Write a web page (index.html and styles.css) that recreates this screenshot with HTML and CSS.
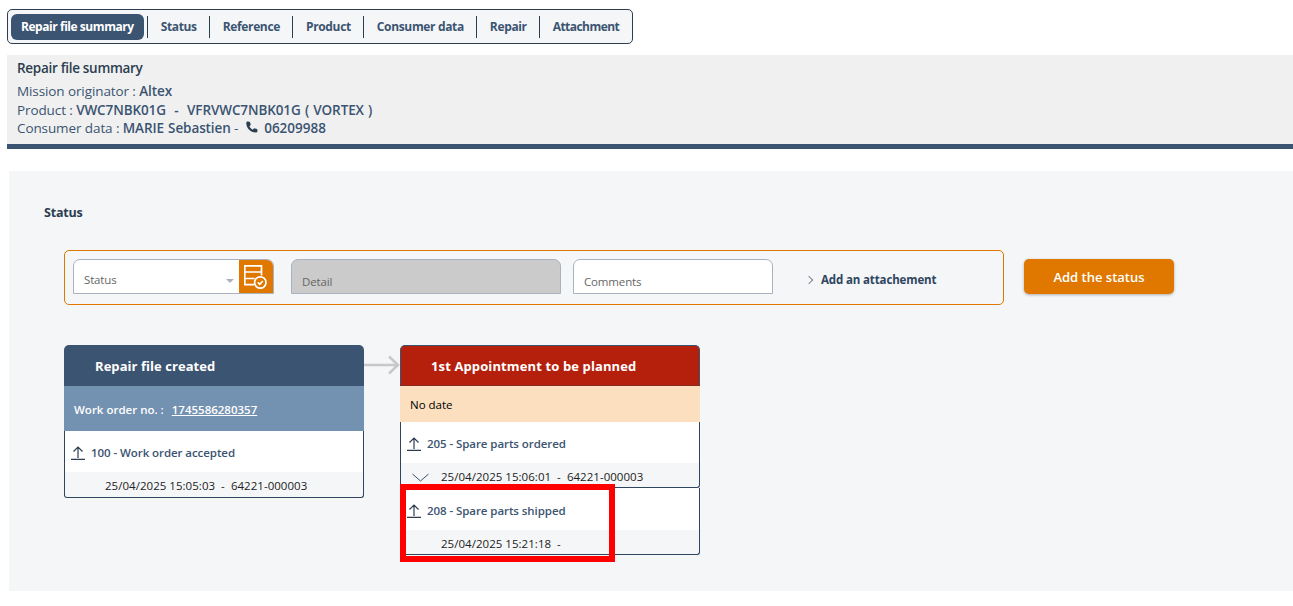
FILE: index.html
```html
<!DOCTYPE html>
<html lang="en">
<head>
<meta charset="UTF-8" />
<title>Repair file summary</title>
<link rel="stylesheet" href="styles.css">
</head>
<body>
  <!-- Tabs -->
  <nav class="tabs">
    <a class="tab active">Repair file summary</a>
    <a class="tab">Status</a>
    <a class="tab">Reference</a>
    <a class="tab">Product</a>
    <a class="tab">Consumer data</a>
    <a class="tab">Repair</a>
    <a class="tab">Attachment</a>
  </nav>

  <!-- Summary -->
  <section class="summary">
    <h2>Repair file summary</h2>
    <p>Mission originator : <b>Altex</b></p>
    <p>Product : <b>VWC7NBK01G &nbsp;-&nbsp; VFRVWC7NBK01G ( VORTEX )</b></p>
    <p>Consumer data : <b>MARIE Sebastien</b> -
      <svg class="phone" width="15" height="15" viewBox="0 0 24 24"><path d="M6.600 2.500l3 .6 1.300 5-2.300 1.900c1.100 2.400 3 4.400 5.400 5.500l2-2.300 5 1.300.6 3c.1 1.200-.8 2.300-2 2.400C10.500 20.300 3.700 13.500 3.600 4.500c.1-1.200 1.300-2.100 3-2z"/></svg>
      <b class="tel">06209988</b></p>
  </section>

  <!-- Status panel -->
  <main class="panel">
    <h3>Status</h3>

    <div class="form-row">
      <form class="status-form">
        <div class="field select">
          <span class="select-label">Status</span>
          <span class="caret"></span>
          <span class="select-btn">
            <svg width="24" height="24" viewBox="0 0 24 24" fill="none" stroke="#fff" stroke-width="1.700">
              <path d="M10 19.700H.8V.8h16.700v9.700M.8 7h16.700M.8 13.500h9.700"/>
              <circle cx="16.300" cy="17.500" r="5.700"/>
              <path d="M13.800 17.300l2 2 3-3.300"/>
            </svg>
          </span>
        </div>
        <div class="field input disabled">Detail</div>
        <div class="field input comments">Comments</div>
        <a class="attach"><span class="chev"></span>Add an attachement</a>
      </form>
      <button class="add-btn" type="button">Add the status</button>
    </div>

    <div class="flow">
      <div class="col">
        <div class="col-head blue">Repair file created</div>
        <div class="col-sub blue-light">Work order no. : <u>1745586280357</u></div>
        <div class="event">
          <div class="event-top">
            <svg class="up" width="16" height="14" viewBox="0 0 16 14" fill="none" stroke="#2c3e50" stroke-width="1.200"><path d="M0 13.400h14M7 12V1M2.500 5.500L7 1l4.500 4.500"/></svg>
            100 - Work order accepted
          </div>
          <div class="event-date">25/04/2025 15:05:03 &nbsp;-&nbsp; 64221-000003</div>
        </div>
      </div>

      <svg class="arrow" width="36" height="22" viewBox="0 0 36 22" fill="none" stroke="#c8c8c8" stroke-width="2.500"><path d="M0 11h34M25 2.500l9 8.500-9 8.500"/></svg>

      <div class="col">
        <div class="col-head red">1st Appointment to be planned</div>
        <div class="col-sub peach">No date</div>
        <div class="event first">
          <div class="event-top">
            <svg class="up" width="16" height="14" viewBox="0 0 16 14" fill="none" stroke="#2c3e50" stroke-width="1.200"><path d="M0 13.400h14M7 12V1M2.500 5.500L7 1l4.500 4.500"/></svg>
            205 - Spare parts ordered
          </div>
          <div class="event-date">
            <svg class="down" width="17" height="9" viewBox="0 0 17 9" fill="none" stroke="#3b5471" stroke-width="1"><path d="M.5 1l8 7 8-7"/></svg>
            25/04/2025 15:06:01 &nbsp;-&nbsp; 64221-000003
          </div>
        </div>
        <div class="event next">
          <div class="event-top">
            <svg class="up" width="16" height="14" viewBox="0 0 16 14" fill="none" stroke="#2c3e50" stroke-width="1.200"><path d="M0 13.400h14M7 12V1M2.500 5.500L7 1l4.500 4.500"/></svg>
            208 - Spare parts shipped
          </div>
          <div class="event-date">25/04/2025 15:21:18 &nbsp;-</div>
        </div>
        <!-- Red annotation box -->
        <div class="highlight"></div>
      </div>
    </div>
  </main>
</body>
</html>
```

FILE: styles.css
```css
* {
  margin: 0;
  padding: 0;
  box-sizing: border-box;
}

html, body {
  height: 100%;
  overflow: hidden;
  background: #fff;
  font-family: 'Open Sans', sans-serif;
  color: #3b5471;
}

/* Tabs */
.tabs {
  display: inline-flex;
  align-items: center;
  height: 35px;
  margin: 9px 0 0 7px;
  padding: 0 3px;
  background: #f5f6f8;
  border: 1px solid #2c3e50;
  border-radius: 5px;
  vertical-align: top;
}

.tab {
  height: 22px;
  padding: 0 12px 0 13px;
  border-left: 1px solid #2c3e50;
  font-size: 12px;
  font-weight: 700;
  letter-spacing: -0.35px;
  line-height: 22px;
}

.tab:last-child {
  padding-right: 10px;
  letter-spacing: -0.55px;
}

.tab.active {
  height: 26px;
  margin-right: 3px;
  padding: 0 10px;
  border-left: 0;
  border-radius: 6px;
  background: #3b5471;
  color: #fff;
  letter-spacing: -0.45px;
  line-height: 26px;
}

/* Summary */
.summary {
  display: block;
  height: 94px;
  margin: 11px 0 0 7px;
  padding: 4px 10px 0;
  background: #f0f0f0;
  border-bottom: 5px solid #3b5471;
  font-size: 13.500px;
  letter-spacing: -0.1px;
  line-height: 18.500px;
}

.summary h2 {
  margin-bottom: 5px;
  font-size: 13.500px;
  font-weight: 600;
  letter-spacing: -0.3px;
  line-height: 18px;
  color: #2c3e50;
}

.summary b {
  font-weight: 600;
  word-spacing: 0.8px;
}

.phone {
  margin: 0 2px -2px 2px;
  fill: #2c3e50;
}

.tel {
  letter-spacing: 0;
}

/* Status panel */
.panel {
  height: 420px;
  margin: 22px 0 0 9px;
  padding: 33px 0 0 35px;
  background: #f5f6f8;
}

.panel h3 {
  font-size: 12.500px;
  font-weight: 700;
  line-height: 18px;
  letter-spacing: -0.2px;
  color: #2c3e50;
}

.form-row {
  display: flex;
  align-items: flex-start;
  gap: 20px;
  margin: 28px 0 0 20px;
}

.status-form {
  display: flex;
  align-items: flex-end;
  width: 940px;
  height: 55px;
  padding: 0 8px 10px;
  border: 1px solid #e07800;
  border-radius: 5px;
}

.field {
  height: 35px;
  border: 1px solid #aab2c0;
  border-radius: 7px 7px 0 0;
  background: #fff;
  font-size: 11.500px;
  letter-spacing: -0.15px;
  color: #666;
}

.select {
  display: flex;
  align-items: center;
  width: 201px;
  overflow: hidden;
  padding-left: 10px;
}

.select-label {
  flex: 1;
  padding-top: 6px;
}

.caret {
  width: 0;
  height: 0;
  margin: 9px 5px 0 0;
  border-left: 4px solid transparent;
  border-right: 4px solid transparent;
  border-top: 4px solid #aab2c0;
}

.select-btn {
  display: flex;
  align-items: center;
  justify-content: center;
  width: 34px;
  height: 100%;
  background: #e07800;
}

.input {
  padding: 13px 10px 0;
  line-height: 18px;
}

.disabled {
  width: 270px;
  margin-left: 17px;
  background: #cbcbcb;
}

.comments {
  width: 200px;
  margin-left: 12px;
}

.attach {
  display: flex;
  align-items: center;
  height: 29px;
  margin-left: 33px;
  font-size: 11.500px;
  font-weight: 700;
  letter-spacing: -0.13px;
  color: #2f4560;
}

.chev {
  width: 6px;
  height: 6px;
  margin-right: 9px;
  border-top: 1px solid #7b8794;
  border-right: 1px solid #7b8794;
  transform: rotate(45deg);
}

.add-btn {
  width: 150px;
  height: 35px;
  margin-top: 9px;
  border: 0;
  border-radius: 5px;
  background: #e07800;
  box-shadow: 0 1px 3px rgba(0, 0, 0, 0.3);
  font-family: inherit;
  font-size: 13px;
  font-weight: 600;
  color: #fff;
}

/* Flow of status columns */
.flow {
  display: flex;
  align-items: flex-start;
  margin: 40px 0 0 20px;
}

.col {
  position: relative;
  width: 300px;
}

.arrow {
  margin-top: 9px;
}

.col-head {
  height: 41px;
  padding-left: 31px;
  border-radius: 5px 5px 0 0;
  font-size: 13px;
  font-weight: 700;
  letter-spacing: 0.05px;
  line-height: 43px;
  color: #fff;
}

.blue { background: #3b5471; }

.red {
  padding-left: 30px;
  background: #b5200d;
  border: 1px solid #3b5471;
  border-bottom-color: #8a2a20;
  letter-spacing: 0.12px;
  line-height: 41px;
}

.col-sub {
  padding-left: 10px;
  font-size: 11.500px;
  font-weight: 600;
}

.blue-light {
  height: 45px;
  background: #7391b1;
  line-height: 47px;
  color: #fff;
}

.blue-light u {
  margin-left: 5px;
  font-weight: 600;
}

.peach {
  height: 36px;
  background: #fbdfbe;
  line-height: 37px;
  font-weight: 400;
  color: #000;
}

.event {
  height: 67px;
  border: 1px solid #2f4560;
  border-top: 0;
  border-radius: 0 0 3px 3px;
  background: #f5f6f8;
  overflow: hidden;
  font-size: 11.500px;
}

.event.first {
  height: 66px;
}

.event-top {
  display: flex;
  align-items: center;
  gap: 4px;
  height: 41px;
  padding: 2px 0 0 6px;
  background: #fff;
  font-weight: 600;
  letter-spacing: -0.07px;
}

.event.next .event-top {
  height: 42px;
  padding-top: 3px;
}

.event-date {
  position: relative;
  height: 26px;
  padding-left: 40px;
  line-height: 28px;
  letter-spacing: 0.03px;
  color: #222;
}

.down {
  position: absolute;
  left: 11px;
  top: 10px;
}

/* annotation drawn on top of the shot */
.highlight {
  position: absolute;
  left: 0;
  top: 139px;
  width: 215px;
  height: 78px;
  border: 6px solid #ff0000;
}
```
